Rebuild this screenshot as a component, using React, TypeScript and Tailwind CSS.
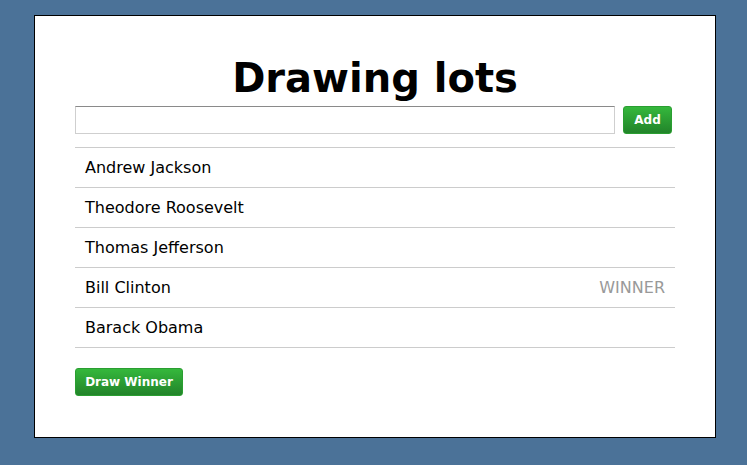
import { useState } from "react"

const people = [
  "Andrew Jackson",
  "Theodore Roosevelt",
  "Thomas Jefferson",
  "Bill Clinton",
  "Barack Obama",
]

export default function App() {
  const [name, setName] = useState("")
  const winner = "Bill Clinton"

  return (
    <div className="min-h-screen bg-[#4b7298] pt-[15px] pb-[27px] font-['DejaVu_Sans',Verdana,sans-serif]">
      <div className="ml-[34px] w-[682px] border border-black bg-white px-[40px] pt-[34px] pb-[41px]">
        <h1 className="text-center text-[40px] font-bold leading-[56px] text-black">Drawing lots</h1>

        <div className="flex items-center gap-[8px]">
          <input
            value={name}
            onChange={(e) => setName(e.target.value)}
            className="h-[28px] w-[540px] border border-[#cfcfcf] border-t-[#8a8a8a] bg-white px-2 text-sm outline-none"
          />
          <button className="h-[28px] w-[49px] rounded-[3px] border border-[#2a9e31] bg-gradient-to-b from-[#35b83c] to-[#22842a] text-[12px] font-bold text-white">
            Add
          </button>
        </div>

        <ul className="mt-[13px] border-t border-[#cccccc]">
          {people.map((p) => (
            <li
              key={p}
              className="flex h-[40px] items-center justify-between border-b border-[#cccccc] px-[10px] text-[16px] text-black"
            >
              <span>{p}</span>
              {p === winner && <span className="text-[#999999]">WINNER</span>}
            </li>
          ))}
        </ul>

        <button className="mt-[20px] h-[28px] w-[108px] rounded-[3px] border border-[#2a9e31] bg-gradient-to-b from-[#35b83c] to-[#22842a] text-[12px] font-bold text-white">
          Draw Winner
        </button>
      </div>
    </div>
  )
}
